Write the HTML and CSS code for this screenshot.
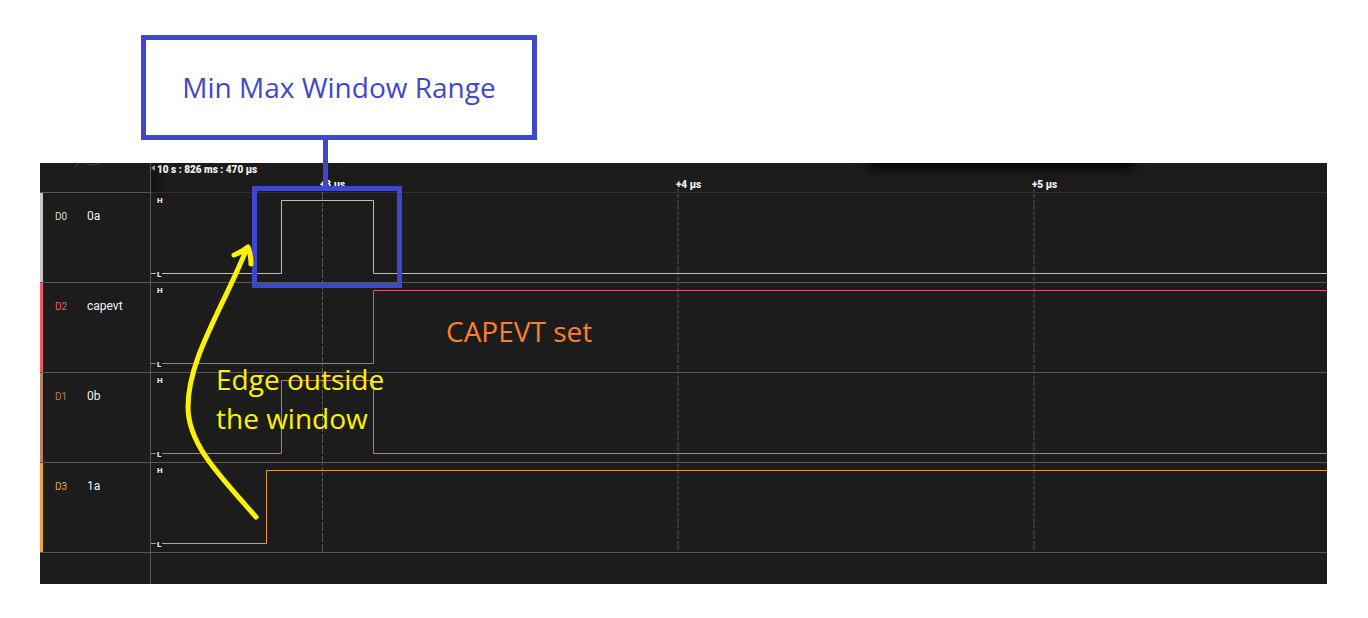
FILE: index.html
```html
<!DOCTYPE html>
<html lang="en">
<head>
<meta charset="utf-8">
<title>Capture window timing</title>
<link rel="stylesheet" href="styles.css">
</head>
<body>
<main class="stage">
  <section class="analyzer">
    <header class="row ruler">
      <div class="corner">
        <svg class="corner-icon" width="32" height="4" viewBox="0 0 32 4"><path d="M0 4L4 0M11 0Q18 4 26 0" /></svg>
      </div>
      <div class="times">
        <svg class="marker" width="4" height="6" viewBox="0 0 4 6"><path d="M4 0V6L0 3Z" /></svg>
        <span class="origin">10 s : 826 ms : 470 µs</span>
        <span class="tick tick-3">+3 µs</span>
        <span class="tick tick-4">+4 µs</span>
        <span class="tick tick-5">+5 µs</span>
      </div>
    </header>
    <div class="channels">
      <svg class="grid"><path class="grid-near" d="M171.5 3V363" /><path class="grid-far" d="M527 0V363M883 0V363" /></svg>
      <div class="row channel d0">
        <div class="label"><span class="id">D0</span><span class="name">0a</span></div>
        <div class="plot"><svg class="wave"><path d="M0 80.5H130.5V7.5H222.5V80.5H8000" /></svg><span class="level">H</span><span class="level">L</span></div>
      </div>
      <div class="row channel d2">
        <div class="label"><span class="id">D2</span><span class="name">capevt</span></div>
        <div class="plot"><svg class="wave"><path d="M0 80.5H222.5V7.5H8000" /></svg><span class="level">H</span><span class="level">L</span></div>
      </div>
      <div class="row channel d1">
        <div class="label"><span class="id">D1</span><span class="name">0b</span></div>
        <div class="plot"><svg class="wave"><path d="M0 80.5H130.5V7.5H222.5V80.5H8000" /></svg><span class="level">H</span><span class="level">L</span></div>
      </div>
      <div class="row channel d3">
        <div class="label"><span class="id">D3</span><span class="name">1a</span></div>
        <div class="plot"><svg class="wave"><path d="M0 80.5H115.5V7.5H8000" /></svg><span class="level">H</span><span class="level">L</span></div>
      </div>
    </div>
    <div class="row footer"><div class="corner"></div><div></div></div>
  </section>

  <div class="note callout">Min Max Window Range</div>
  <div class="connector"></div>
  <div class="window-box"></div>
  <p class="note capevt">CAPEVT set</p>
  <p class="note edge">Edge outside<br>the window</p>
  <svg class="arrow" width="80" height="290" viewBox="180 235 80 290"><path d="M256 517C219 475 188 444 188 407C188 359 222 310 247 248M234 255Q242 252 248 247Q251 255 251 264" /></svg>
</main>
</body>
</html>
```
FILE: styles.css
```css
* { box-sizing: border-box; }
body {
  margin: 0;
  background: #fff;
  font-family: Roboto, "Liberation Sans", sans-serif;
}
.stage {
  position: relative;
  padding: 163px 41px 34px 40px;
}
.analyzer {
  background: #1c1c1c;
  color: #e6e6e6;
  overflow: hidden;
}
.row {
  display: grid;
  grid-template-columns: 111px 1fr;
}
.corner, .label { border-right: 1px solid #56575b; }
.ruler { height: 30px; }
.ruler .corner { border-bottom: 1px solid #56575b; padding-left: 35px; }
.corner-icon { display: block; fill: none; stroke: #444; }
.times {
  position: relative;
  overflow: hidden;
  border-bottom: 1px solid #303034;
  padding-left: 6px;
  font-size: 10px;
  line-height: 14px;
  font-weight: 900;
  color: #f2f2f2;
  background: linear-gradient(to right, #121212, transparent 20px);
}
/* shadow cast by the toolbar above the ruler */
.times::before {
  content: "";
  position: absolute;
  top: -20px;
  left: 720px;
  width: 260px;
  height: 20px;
  box-shadow: 0 3px 14px 2px #000;
}
.origin { display: block; }
.marker { position: absolute; left: 0; top: 2px; fill: #999; }
.tick { position: absolute; top: 15px; }
.tick-3 { left: 169px; }
.tick-4 { left: 525px; }
.tick-5 { left: 881px; }
.channels { position: relative; }
.grid {
  position: absolute;
  top: -4px;
  left: 111px;
  width: calc(100% - 111px);
  height: 364px;
  fill: none;
  stroke-dasharray: 4 1 4 2;
}
.grid-near { stroke: #5a5a5a; }
.grid-far { stroke: #38383a; stroke-width: 2px; }
.channel {
  position: relative;
  height: 90px;
  border-bottom: 1px solid #56575b;
}
.label {
  display: flex;
  align-items: flex-start;
  padding: 15px 0 0 12px;
  border-left: 3px solid var(--bar);
  line-height: 16px;
}
.id { width: 32px; padding-top: 1px; font-size: 10px; color: var(--id); }
.name { font-size: 12px; color: #f2f2f2; }
.plot {
  position: relative;
  display: flex;
  flex-direction: column;
  justify-content: space-between;
  align-items: flex-start;
  padding: 3px 5px;
}
.wave {
  position: absolute;
  top: 0;
  left: 0;
  width: 100%;
  height: 100%;
  fill: none;
  stroke: var(--wave);
}
.level {
  position: relative;
  padding: 0 1px;
  font-size: 8px;
  line-height: 9px;
  font-weight: 900;
  background: #181818;
}
.d0 { --bar: #c4c6c7; --id: #d8d8d8; --wave: #bdbdbd; }
.d2 { --bar: #f05b6b; --id: #f05b68; --wave: #d45c6b; }
.d1 { --bar: #b58468; --id: #c47a50; --wave: #af8069; }
.d3 { --bar: #f0a040; --id: #e8a257; --wave: #e09a45; }
.footer { height: 31px; }
.note {
  position: absolute;
  margin: 0;
  font-family: "Open Sans", "Noto Sans", sans-serif;
  font-size: 28px;
  line-height: 39px;
  white-space: nowrap;
}
.callout {
  left: 141px;
  top: 35px;
  width: 396px;
  height: 105px;
  display: flex;
  align-items: center;
  justify-content: center;
  border: 5px solid #3f48cc;
  color: #3f48cc;
}
.connector {
  position: absolute;
  left: 323px;
  top: 140px;
  width: 5px;
  height: 46px;
  background: #3f48cc;
}
.window-box {
  position: absolute;
  left: 252px;
  top: 186px;
  width: 150px;
  height: 102px;
  border: 5px solid #3f48cc;
}
.capevt { left: 446px; top: 312px; color: #ff7f27; }
.edge { left: 216px; top: 360px; color: #fff200; }
.arrow {
  position: absolute;
  left: 180px;
  top: 235px;
  fill: none;
  stroke: #fff200;
  stroke-width: 5px;
  stroke-linecap: round;
  stroke-linejoin: round;
}
```
